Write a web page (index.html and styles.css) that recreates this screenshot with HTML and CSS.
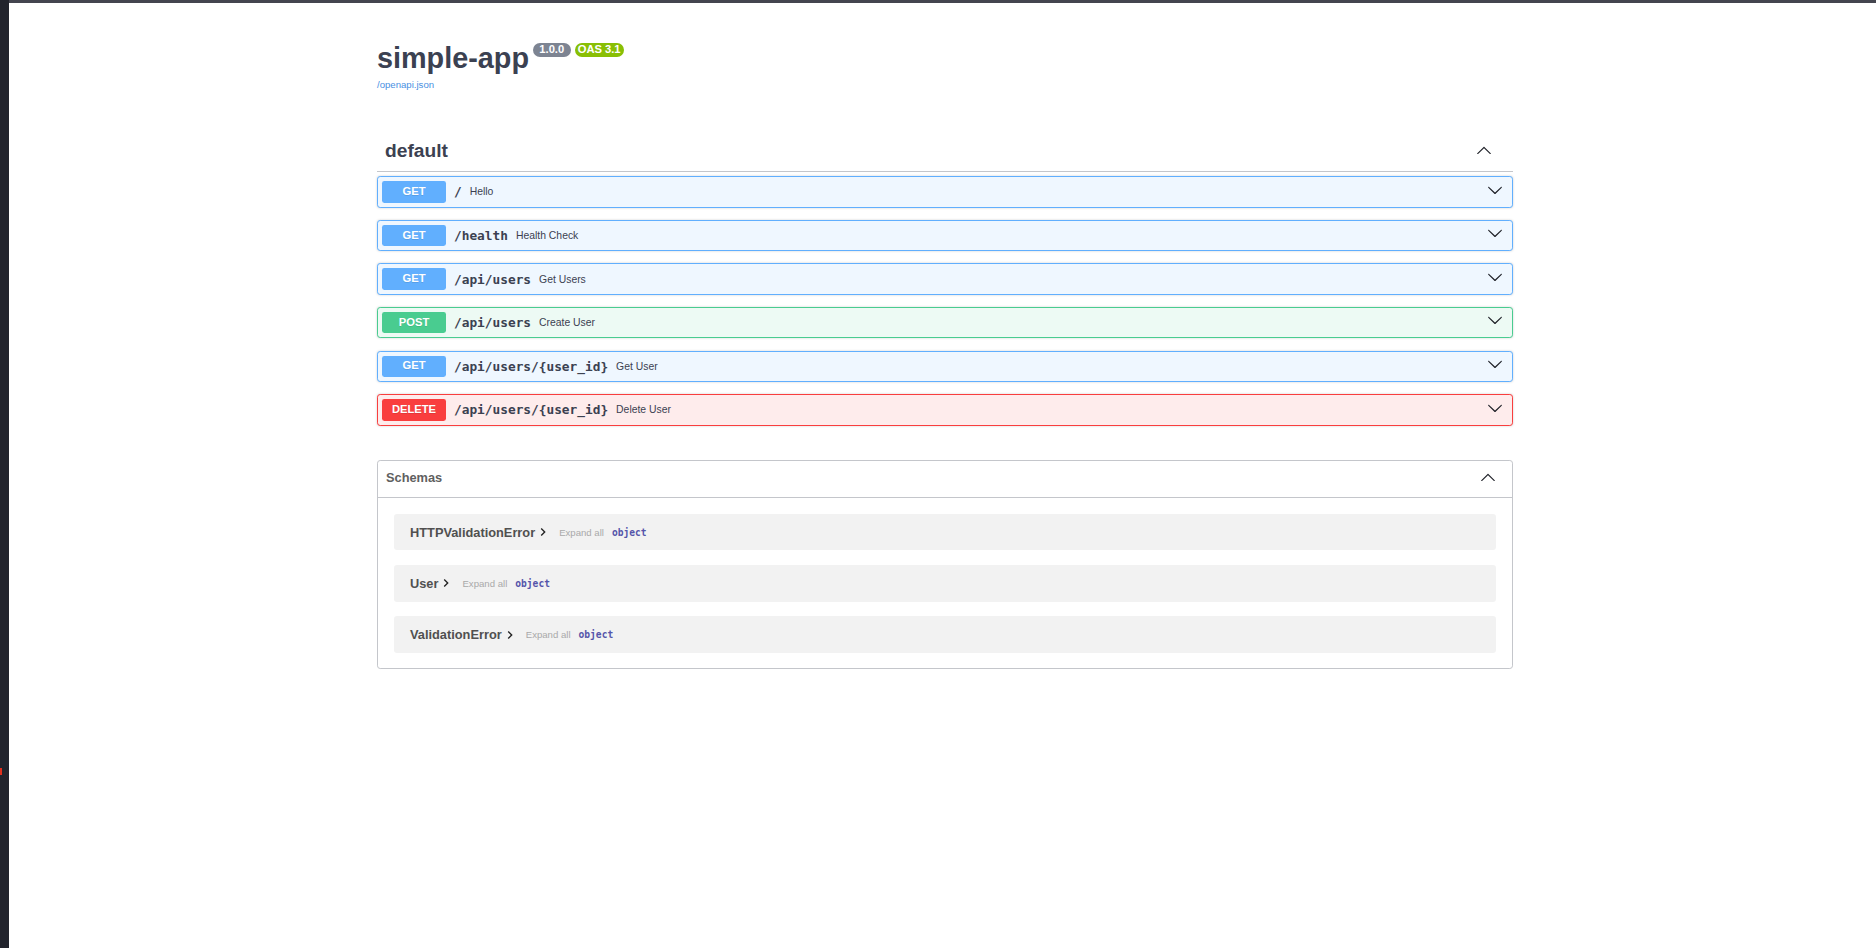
FILE: index.html
```html
<!DOCTYPE html>
<html lang="en">
<head>
  <meta charset="UTF-8" />
  <meta name="viewport" content="width=device-width, initial-scale=1.0"/>
  <title>simple-app - Swagger UI</title>
  <link rel="stylesheet" href="styles.css">
</head>
<body>
  <div class="page">
    <div class="wrapper">

      <div class="info">
        <div class="title-row">
          <h2 class="title">simple-app</h2>
          <span class="badge version"> 1.0.0 </span>
          <span class="badge oas">OAS 3.1</span>
        </div>
        <a class="spec-link" href="#">/openapi.json</a>
      </div>

      <section class="tag-section">
        <h3 class="opblock-tag">
          <span>default</span>
          <svg class="arrow tag-arrow" viewBox="0 0 20 20" width="16" height="16"><path d="M17.418 14.908c.272.268.709.268.979 0s.271-.701 0-.969l-7.908-7.83c-.27-.268-.707-.268-.979 0l-7.908 7.83c-.27.268-.27.701 0 .969.271.268.709.268.979 0L10 7.717l7.418 7.191z"/></svg>
        </h3>

        <div class="opblock get">
          <div class="summary">
            <span class="method">GET</span>
            <span class="path">/</span>
            <span class="desc">Hello</span>
            <svg class="arrow op-arrow" viewBox="0 0 20 20" width="16" height="16"><path d="M17.418 6.109c.272-.268.709-.268.979 0s.271.701 0 .969l-7.908 7.83c-.27.268-.707.268-.979 0l-7.908-7.83c-.27-.268-.27-.701 0-.969.271-.268.709-.268.979 0L10 13.25l7.418-7.141z"/></svg>
          </div>
        </div>

        <div class="opblock get">
          <div class="summary">
            <span class="method">GET</span>
            <span class="path">/health</span>
            <span class="desc">Health Check</span>
            <svg class="arrow op-arrow" viewBox="0 0 20 20" width="16" height="16"><path d="M17.418 6.109c.272-.268.709-.268.979 0s.271.701 0 .969l-7.908 7.83c-.27.268-.707.268-.979 0l-7.908-7.83c-.27-.268-.27-.701 0-.969.271-.268.709-.268.979 0L10 13.25l7.418-7.141z"/></svg>
          </div>
        </div>

        <div class="opblock get">
          <div class="summary">
            <span class="method">GET</span>
            <span class="path">/api/users</span>
            <span class="desc">Get Users</span>
            <svg class="arrow op-arrow" viewBox="0 0 20 20" width="16" height="16"><path d="M17.418 6.109c.272-.268.709-.268.979 0s.271.701 0 .969l-7.908 7.83c-.27.268-.707.268-.979 0l-7.908-7.830c-.27-.268-.27-.701 0-.969.271-.268.709-.268.979 0L10 13.25l7.418-7.141z"/></svg>
          </div>
        </div>

        <div class="opblock post">
          <div class="summary">
            <span class="method">POST</span>
            <span class="path">/api/users</span>
            <span class="desc">Create User</span>
            <svg class="arrow op-arrow" viewBox="0 0 20 20" width="16" height="16"><path d="M17.418 6.109c.272-.268.709-.268.979 0s.271.701 0 .969l-7.908 7.83c-.27.268-.707.268-.979 0l-7.908-7.83c-.27-.268-.27-.701 0-.969.271-.268.709-.268.979 0L10 13.25l7.418-7.141z"/></svg>
          </div>
        </div>

        <div class="opblock get">
          <div class="summary">
            <span class="method">GET</span>
            <span class="path">/api/users/{user_id}</span>
            <span class="desc">Get User</span>
            <svg class="arrow op-arrow" viewBox="0 0 20 20" width="16" height="16"><path d="M17.418 6.109c.272-.268.709-.268.979 0s.271.701 0 .969l-7.908 7.83c-.27.268-.707.268-.979 0l-7.908-7.83c-.27-.268-.27-.701 0-.969.271-.268.709-.268.979 0L10 13.25l7.418-7.141z"/></svg>
          </div>
        </div>

        <div class="opblock delete">
          <div class="summary">
            <span class="method">DELETE</span>
            <span class="path">/api/users/{user_id}</span>
            <span class="desc">Delete User</span>
            <svg class="arrow op-arrow" viewBox="0 0 20 20" width="16" height="16"><path d="M17.418 6.109c.272-.268.709-.268.979 0s.271.701 0 .969l-7.908 7.83c-.27.268-.707.268-.979 0l-7.908-7.83c-.27-.268-.27-.701 0-.969.271-.268.709-.268.979 0L10 13.25l7.418-7.141z"/></svg>
          </div>
        </div>
      </section>

      <section class="models">
        <h4 class="models-head">
          <span>Schemas</span>
          <svg class="arrow models-arrow" viewBox="0 0 20 20" width="16" height="16"><path d="M17.418 14.908c.272.268.709.268.979 0s.271-.701 0-.969l-7.908-7.83c-.27-.268-.707-.268-.979 0l-7.908 7.83c-.27.268-.27.701 0 .969.271.268.709.268.979 0L10 7.717l7.418 7.191z"/></svg>
        </h4>
        <div class="models-body">
          <div class="model-container">
            <span class="model-title">HTTPValidationError</span>
            <svg class="toggle" viewBox="0 0 24 24" width="16" height="16"><path d="M10 6L8.59 7.41 13.17 12l-4.58 4.59L10 18l6-6z"/></svg>
            <span class="expand">Expand all</span>
            <span class="prop-type">object</span>
          </div>
          <div class="model-container">
            <span class="model-title">User</span>
            <svg class="toggle" viewBox="0 0 24 24" width="16" height="16"><path d="M10 6L8.59 7.41 13.17 12l-4.58 4.59L10 18l6-6z"/></svg>
            <span class="expand">Expand all</span>
            <span class="prop-type">object</span>
          </div>
          <div class="model-container">
            <span class="model-title">ValidationError</span>
            <svg class="toggle" viewBox="0 0 24 24" width="16" height="16"><path d="M10 6L8.59 7.41 13.17 12l-4.58 4.59L10 18l6-6z"/></svg>
            <span class="expand">Expand all</span>
            <span class="prop-type">object</span>
          </div>
        </div>
      </section>

    </div>
  </div>
  <span class="edge-mark"></span>
</body>
</html>
```

FILE: styles.css
```css
body {
  margin: 0;
  background-color: #22242d;
  font-family: "Liberation Sans", Arial, sans-serif;
  color: #3b4151;
}

.page {
  margin-left: 9px;
  min-height: 945px;
  background-color: #ffffff;
  border-top: 3px solid #44454f;
}

.wrapper {
  width: 1136px;
  margin-left: 368px;
}

/* header */

.info {
  padding-top: 38.7px;
}

.title-row {
  display: flex;
  align-items: flex-start;
}

.title {
  margin: 0;
  font-size: 28.8px;
  line-height: 33px;
  font-weight: bold;
  color: #3b4151;
}

.badge {
  margin-top: 1.6px;
  margin-left: 4px;
  padding: 0 3.2px;
  height: 13.4px;
  line-height: 13.6px;
  border-radius: 46px;
  font-size: 11.2px;
  font-weight: bold;
  color: #ffffff;
  white-space: pre;
}

.badge.version {
  background-color: #7d8492;
}

.badge.oas {
  background-color: #89bf04;
}

.spec-link {
  display: block;
  margin-top: 4.4px;
  font-size: 9.6px;
  line-height: 11px;
  color: #4990e2;
  text-decoration: none;
}

/* operations */

.tag-section {
  margin-top: 41.5px;
}

.opblock-tag {
  display: flex;
  align-items: center;
  justify-content: space-between;
  margin: 0 0 4px;
  padding: 8px 16px 9.7px 8px;
  border-bottom: 1px solid #c4c6cb;
  font-size: 19.2px;
  line-height: 22px;
  font-weight: bold;
  color: #3b4151;
}

.arrow {
  flex-shrink: 0;
  fill: #1f2128;
}

.tag-arrow {
  margin-right: 5px;
  margin-bottom: 1.5px;
}

.opblock {
  margin-bottom: 12.3px;
  border: 1px solid;
  border-radius: 3.2px;
  box-shadow: 0 0 2.4px rgba(0, 0, 0, 0.19);
}

.opblock.get {
  background-color: #eff7ff;
  border-color: #61affe;
}

.opblock.post {
  background-color: #edfaf4;
  border-color: #49cc90;
}

.opblock.delete {
  background-color: #feecec;
  border-color: #f93e3e;
}

.summary {
  display: flex;
  align-items: center;
  padding: 4px;
}

.method {
  min-width: 64px;
  padding: 4.8px 0;
  line-height: 11.7px;
  border-radius: 2.4px;
  text-align: center;
  font-size: 11.2px;
  font-weight: bold;
  color: #ffffff;
  text-shadow: 0 0.8px 0 rgba(0, 0, 0, 0.1);
}

.get .method {
  background-color: #61affe;
}

.post .method {
  background-color: #49cc90;
}

.delete .method {
  background-color: #f93e3e;
}

.path {
  padding: 0 8px;
  font-family: "DejaVu Sans Mono", monospace;
  font-size: 12.8px;
  font-weight: bold;
  color: #3b4151;
}

.desc {
  flex: 1;
  font-size: 10.4px;
  color: #3b4151;
}

.op-arrow {
  margin-right: 5px;
  margin-bottom: 4.6px;
}

/* schemas */

.models {
  margin-top: 34px;
  border: 1px solid #c4c6cb;
  border-radius: 3.2px;
}

.models-head {
  display: flex;
  align-items: center;
  justify-content: space-between;
  height: 36.3px;
  margin: 0;
  padding: 0 16px 0 8px;
  border-bottom: 1px solid #c4c6cb;
  font-size: 12.8px;
  line-height: 14.7px;
  font-weight: bold;
  color: #606060;
}

.models-arrow {
  margin-bottom: 3.4px;
}

.models-body {
  padding: 16px 16px 15.5px;
}

.model-container {
  display: flex;
  align-items: center;
  height: 36.6px;
  margin-bottom: 14.6px;
  padding-left: 16px;
  border-radius: 3.2px;
  background-color: #f2f2f2;
}

.model-container:last-child {
  margin-bottom: 0;
}

.model-title {
  font-size: 12.8px;
  font-weight: bold;
  color: #505050;
}

.toggle {
  fill: #222222;
}

.expand {
  margin-left: 8px;
  font-size: 9.6px;
  color: #a9a9a9;
}

.prop-type {
  margin-left: 8px;
  font-family: "DejaVu Sans Mono", monospace;
  font-size: 9.6px;
  font-weight: bold;
  color: #5555aa;
}

.edge-mark {
  position: absolute;
  left: 0;
  top: 768px;
  width: 1.5px;
  height: 7px;
  background-color: #e0301e;
}
```
